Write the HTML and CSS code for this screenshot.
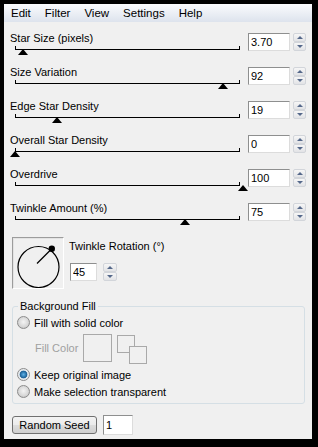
FILE: index.html
```html
<!DOCTYPE html>
<html lang="en">
<head>
  <meta charset="UTF-8">
  <meta name="viewport" content="width=device-width, initial-scale=1.0">
  <title>Star Effect</title>
  <link rel="stylesheet" href="styles.css">
</head>
<body>
  <div class="window">
    <ul class="menu">
      <li>Edit</li>
      <li>Filter</li>
      <li>View</li>
      <li>Settings</li>
      <li>Help</li>
    </ul>

    <div class="sliders">
      <div class="row">
        <div class="slider">
          <span class="label">Star Size (pixels)</span>
          <div class="track"><span class="thumb" style="left: 2px"></span></div>
        </div>
        <input class="num" value="3.70">
        <div class="spin"><span class="up"></span><span class="down"></span></div>
      </div>
      <div class="row">
        <div class="slider">
          <span class="label">Size Variation</span>
          <div class="track"><span class="thumb" style="left: 202px"></span></div>
        </div>
        <input class="num" value="92">
        <div class="spin"><span class="up"></span><span class="down"></span></div>
      </div>
      <div class="row">
        <div class="slider">
          <span class="label">Edge Star Density</span>
          <div class="track"><span class="thumb" style="left: 36px"></span></div>
        </div>
        <input class="num" value="19">
        <div class="spin"><span class="up"></span><span class="down"></span></div>
      </div>
      <div class="row">
        <div class="slider">
          <span class="label">Overall Star Density</span>
          <div class="track"><span class="thumb" style="left: -6px"></span></div>
        </div>
        <input class="num" value="0">
        <div class="spin"><span class="up"></span><span class="down"></span></div>
      </div>
      <div class="row">
        <div class="slider">
          <span class="label">Overdrive</span>
          <div class="track"><span class="thumb" style="left: 222px"></span></div>
        </div>
        <input class="num" value="100">
        <div class="spin"><span class="up"></span><span class="down"></span></div>
      </div>
      <div class="row">
        <div class="slider">
          <span class="label">Twinkle Amount (%)</span>
          <div class="track"><span class="thumb" style="left: 164px"></span></div>
        </div>
        <input class="num" value="75">
        <div class="spin"><span class="up"></span><span class="down"></span></div>
      </div>
    </div>

    <div class="rotation">
      <div class="dial">
        <svg width="50" height="50" viewBox="0 0 50 50">
          <circle cx="25.5" cy="29" r="20.5" fill="none" stroke="#000" stroke-width="1.2"/>
          <line x1="24" y1="25.5" x2="38.5" y2="11" stroke="#000" stroke-width="1.2"/>
          <circle cx="38.8" cy="10.8" r="3.2" fill="#000"/>
        </svg>
      </div>
      <div class="rot-side">
        <span class="label">Twinkle Rotation (°)</span>
        <div class="rot-input">
          <input class="num small" value="45">
          <div class="spin"><span class="up"></span><span class="down"></span></div>
        </div>
      </div>
    </div>

    <fieldset class="group">
      <legend>Background Fill</legend>
      <label class="opt"><input type="radio" name="fill">Fill with solid color</label>
      <div class="fill-row">
        <span class="fill-label">Fill Color</span>
        <span class="swatch"></span>
        <span class="swap">
          <span class="sq back"></span>
          <span class="sq front"></span>
        </span>
      </div>
      <label class="opt"><input type="radio" name="fill" checked>Keep original image</label>
      <label class="opt"><input type="radio" name="fill">Make selection transparent</label>
    </fieldset>

    <div class="seed">
      <button class="btn">Random Seed</button>
      <input class="num seed-num" value="1">
    </div>
  </div>
</body>
</html>
```

FILE: styles.css
```css
* {
  box-sizing: border-box;
}

body {
  margin: 0;
  background-color: #000;
  font-family: "Liberation Sans", Arial, sans-serif;
  font-size: 11px;
  color: #000;
}

.window {
  margin: 4px 6px 8px 4px;
  height: 435px;
  background-color: #f0f0f0;
  display: flex;
  flex-direction: column;
}

.menu {
  list-style: none;
  margin: 0;
  padding: 0 0 0 7px;
  height: 18px;
  display: flex;
  align-items: center;
  gap: 14px;
  font-size: 11.5px;
  background: linear-gradient(#fafbfd, #dde3ed);
}

.sliders {
  padding: 11px 6px 0 6px;
}

.row {
  display: flex;
  align-items: flex-start;
  height: 34px;
}

.slider {
  flex: 1;
}

.label {
  display: block;
  line-height: 14px;
  margin-top: -2px;
}

.track {
  position: relative;
  height: 4px;
  margin: 1px 8px 0 5px;
  border: 1px solid #000;
  border-top: 0;
}

.thumb {
  position: absolute;
  top: 3px;
  width: 0;
  height: 0;
  border-left: 5px solid transparent;
  border-right: 5px solid transparent;
  border-bottom: 6px solid #000;
}

.num {
  width: 42px;
  height: 18px;
  margin: 0;
  padding: 0 0 0 2px;
  border: 1px solid;
  border-color: #8e8f8f #dcdcdc #dcdcdc #8e8f8f;
  background-color: #fff;
  font-family: inherit;
  font-size: 11px;
  color: #000;
  outline: none;
}

.spin {
  display: flex;
  flex-direction: column;
  width: 13px;
  height: 18px;
  margin-left: 3px;
}

.spin span {
  flex: 1;
  display: flex;
  align-items: center;
  justify-content: center;
  border: 1px solid #d2d5da;
  border-radius: 2px;
  background: linear-gradient(#f6f6f6, #e2e3e6);
}

.spin span::before {
  content: '';
  border-left: 3px solid transparent;
  border-right: 3px solid transparent;
}

.spin .up::before {
  border-bottom: 3px solid #55688a;
}

.spin .down::before {
  border-top: 3px solid #55688a;
}

.rotation {
  display: flex;
  padding-left: 8px;
  height: 52px;
}

.dial {
  width: 52px;
  height: 52px;
  border: 1px solid;
  border-color: #9c9c9c #ffffff #ffffff #9c9c9c;
  box-shadow: inset 1px 1px 0 #e3e3e3;
}

.dial svg {
  display: block;
}

.rot-side {
  margin-left: 5px;
  padding-top: 4px;
}

.rot-input {
  display: flex;
  margin: 10px 0 0 1px;
}

.num.small {
  width: 27px;
}

.rot-input .spin {
  margin-left: 6px;
  width: 14px;
}

.group {
  margin: 10px 7px 0 8px;
  padding: 1px 4px 3px 4px;
  border: 1px solid #d5dfe5;
  border-radius: 3px;
  min-width: 0;
}

.group legend {
  padding: 0 2px;
  margin-left: 1px;
  line-height: 14px;
}

.opt {
  display: flex;
  align-items: center;
  height: 17px;
}

.opt input {
  appearance: none;
  width: 13px;
  height: 13px;
  margin: 0 4px 0 0;
  border: 1px solid #8c8c8c;
  border-radius: 50%;
  background: radial-gradient(circle at 50% 45%, #f4f4f4 0, #d6d6d6 5px, #c9c9c9 6px);
}

.opt input:checked {
  background: radial-gradient(circle at 50% 50%, #5fb2e8 0, #1a5f95 3.5px, #dde4ea 4.2px, #f2f2f2 6px);
}

.fill-row {
  display: flex;
  align-items: flex-start;
  height: 29px;
  margin: 3px 0;
  padding-left: 18px;
}

.fill-label {
  width: 48px;
  line-height: 28px;
  color: #a0a0a0;
}

.swatch {
  width: 29px;
  height: 28px;
  border: 1px solid #a9a9a9;
}

.swap {
  position: relative;
  width: 31px;
  height: 30px;
  margin-left: 5px;
}

.sq {
  position: absolute;
  width: 18px;
  height: 18px;
  border: 1px solid #a9a9a9;
  background-color: #f0f0f0;
}

.sq.back {
  left: 0;
  top: 1px;
}

.sq.front {
  left: 12px;
  top: 12px;
}

.seed {
  display: flex;
  align-items: center;
  gap: 6px;
  margin: 11px 0 0 8px;
}

.btn {
  width: 85px;
  height: 18px;
  padding: 0;
  border: 1px solid #707070;
  border-radius: 3px;
  background: linear-gradient(#f3f3f3 0, #ebebeb 50%, #dddddd 51%, #cfcfcf 100%);
  font-family: inherit;
  font-size: 11px;
  color: #000;
}

.num.seed-num {
  width: 30px;
  height: 20px;
}
```
